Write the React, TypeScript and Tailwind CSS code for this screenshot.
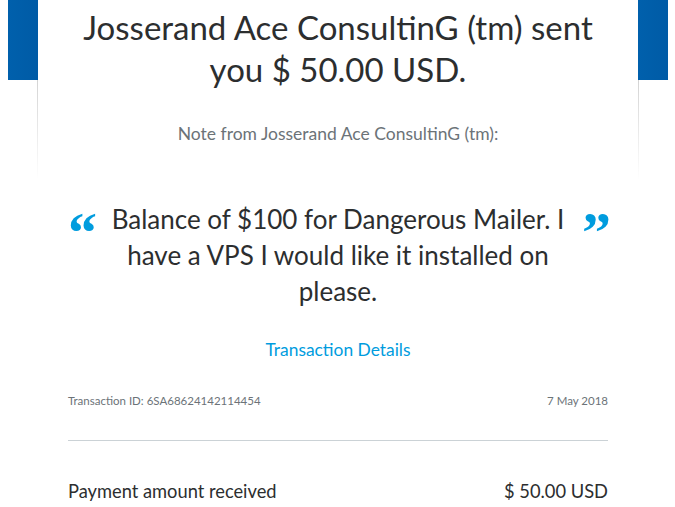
const BLUE = 'bg-[linear-gradient(90deg,#0060ac,#005ba6)]';

function QuoteMark({ side }: { side: 'open' | 'close' }) {
  return (
    <span className="mt-[3px] h-[40px] w-[26px] shrink-0 select-none text-[58px] font-bold leading-[1] text-[#009cde] [font-family:'Liberation_Serif',serif]">
      {side === 'open' ? '\u201C' : '\u201D'}
    </span>
  );
}

export default function App() {
  return (
    <div className="min-h-[507px] w-[675px] overflow-hidden bg-white [font-family:Lato,'Noto_Sans',sans-serif]">
      <div className="ml-[8px] flex">
        {/* left blue tab */}
        <div className={`h-[80px] w-[30px] shrink-0 ${BLUE}`} />

        {/* card */}
        <div className="relative w-[600px] shrink-0 bg-white">
          <div className="absolute left-[-1px] top-[80px] h-[100px] w-px bg-[linear-gradient(180deg,#d4d4d4,rgba(255,255,255,0))]" />
          <div className="absolute right-[-1px] top-[80px] h-[100px] w-px bg-[linear-gradient(180deg,#d4d4d4,rgba(255,255,255,0))]" />

          <div className="px-[30px]">
            <h1 className="pt-[6px] text-center text-[33px] leading-[42px] font-normal text-[#2c2e2f]">
              Josserand Ace ConsultinG (tm) sent
              <br />
              you $ 50.00 USD.
            </h1>

            <p className="mt-[34px] text-center text-[17.5px] leading-[20px] text-[#6c7378]">
              Note from Josserand Ace ConsultinG (tm):
            </p>

            <div className="mt-[57px] flex items-start">
              <QuoteMark side="open" />
              <p className="flex-1 px-[10px] text-center text-[26px] leading-[36px] text-[#2c2e2f]">
                Balance of $100 for Dangerous Mailer. I have a VPS I would like it installed on please.
              </p>
              <QuoteMark side="close" />
            </div>

            <div className="mt-[29px] text-center">
              <a href="#" className="text-[17.4px] leading-[24px] text-[#009cde]">
                Transaction Details
              </a>
            </div>

            <div className="mt-[32px] flex justify-between text-[11.5px] leading-[14px] text-[#6c7378]">
              <span>Transaction ID: 6SA68624142114454</span>
              <span>7 May 2018</span>
            </div>

            <div className="mt-[32px] border-t border-[#cbd2d6]" />

            <div className="mt-[38px] flex justify-between text-[18.3px] leading-[24px] text-[#2c2e2f]">
              <span>Payment amount received</span>
              <span>$ 50.00 USD</span>
            </div>
          </div>
        </div>

        {/* right blue tab */}
        <div className={`h-[80px] w-[30px] shrink-0 ${BLUE}`} />
      </div>
    </div>
  );
}
